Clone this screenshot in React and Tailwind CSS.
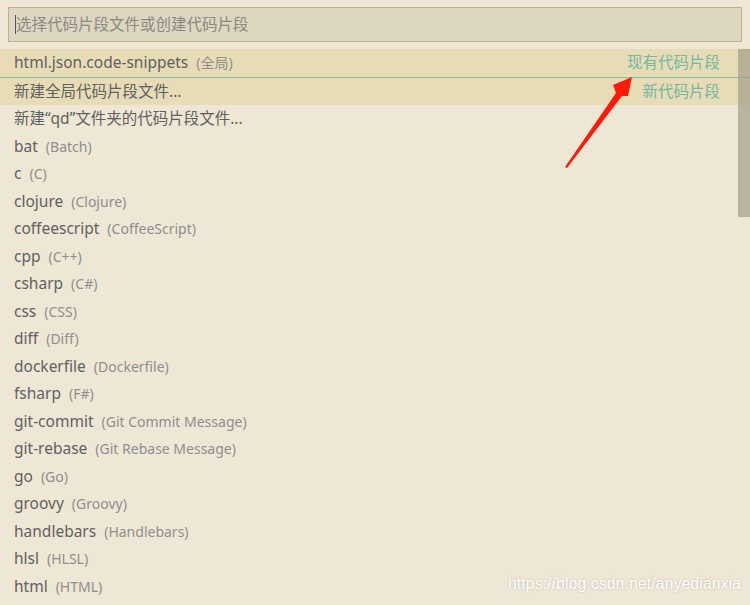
import React from 'react';

const langs = [
  ['bat', 'Batch'],
  ['c', 'C'],
  ['clojure', 'Clojure'],
  ['coffeescript', 'CoffeeScript'],
  ['cpp', 'C++'],
  ['csharp', 'C#'],
  ['css', 'CSS'],
  ['diff', 'Diff'],
  ['dockerfile', 'Dockerfile'],
  ['fsharp', 'F#'],
  ['git-commit', 'Git Commit Message'],
  ['git-rebase', 'Git Rebase Message'],
  ['go', 'Go'],
  ['groovy', 'Groovy'],
  ['handlebars', 'Handlebars'],
  ['hlsl', 'HLSL'],
  ['html', 'HTML'],
];

function Row({ label, desc, hint, className = '' }) {
  return (
    <div className={'flex h-[27.5px] shrink-0 items-center pl-[14px] pr-[30px] ' + className}>
      <span className="text-[15.5px] text-[#616161]">{label}</span>
      {desc && <span className="ml-[8px] text-[14px] text-[#8e8e8e]">{desc}</span>}
      {hint && <span className="ml-auto text-[15.5px] text-[#72b8a2]">{hint}</span>}
    </div>
  );
}

export default function App() {
  return (
    <div
      className="relative h-[605px] w-[750px] overflow-hidden bg-[#efe7d5]"
      style={{ fontFamily: '"Noto Sans", "Noto Sans CJK SC", sans-serif' }}
    >
      {/* Search box */}
      <div className="px-[8px] pt-[7px]">
        <div className="flex h-[35px] items-center border border-[#c8aa88] bg-[#ddd6c1] pl-[6px]">
          <span className="h-[19px] w-px bg-[#555]" />
          <span className="text-[15.5px] text-[#8a8a82]">选择代码片段文件或创建代码片段</span>
        </div>
      </div>

      {/* List */}
      <div className="mt-[7px] flex flex-col">
        <Row
          label="html.json.code-snippets"
          desc="(全局)"
          hint="现有代码片段"
          className="bg-[#e8dcb6]"
        />
        <div className="h-px bg-[#78c0a8]" />
        <Row label="新建全局代码片段文件..." hint="新代码片段" className="bg-[#e8dcb6] h-[26.5px]" />
        <Row label="新建“qd”文件夹的代码片段文件..." />
        {langs.map(([n, d]) => (
          <Row key={n} label={n} desc={`(${d})`} />
        ))}
      </div>

      {/* Scrollbar */}
      <div className="absolute right-0 top-[49px] h-[168px] w-[12px] bg-[#a59d8a]/70" />

      {/* Annotation arrow */}
      <svg className="absolute left-0 top-0" width="750" height="605" viewBox="0 0 750 605">
        <polygon
          points="565,167 616,93 613,85 632,77 628,96 622,96 567,168"
          fill="#ff1a0a"
        />
      </svg>

      {/* Watermark */}
      <div
        className="absolute bottom-[9px] right-[9px] text-[16px] text-white"
        style={{ fontFamily: '"Liberation Sans", Arial, sans-serif', textShadow: '0 0 2px rgba(0,0,0,0.25)' }}
      >
        https://blog.csdn.net/anyedianxia
      </div>
    </div>
  );
}
